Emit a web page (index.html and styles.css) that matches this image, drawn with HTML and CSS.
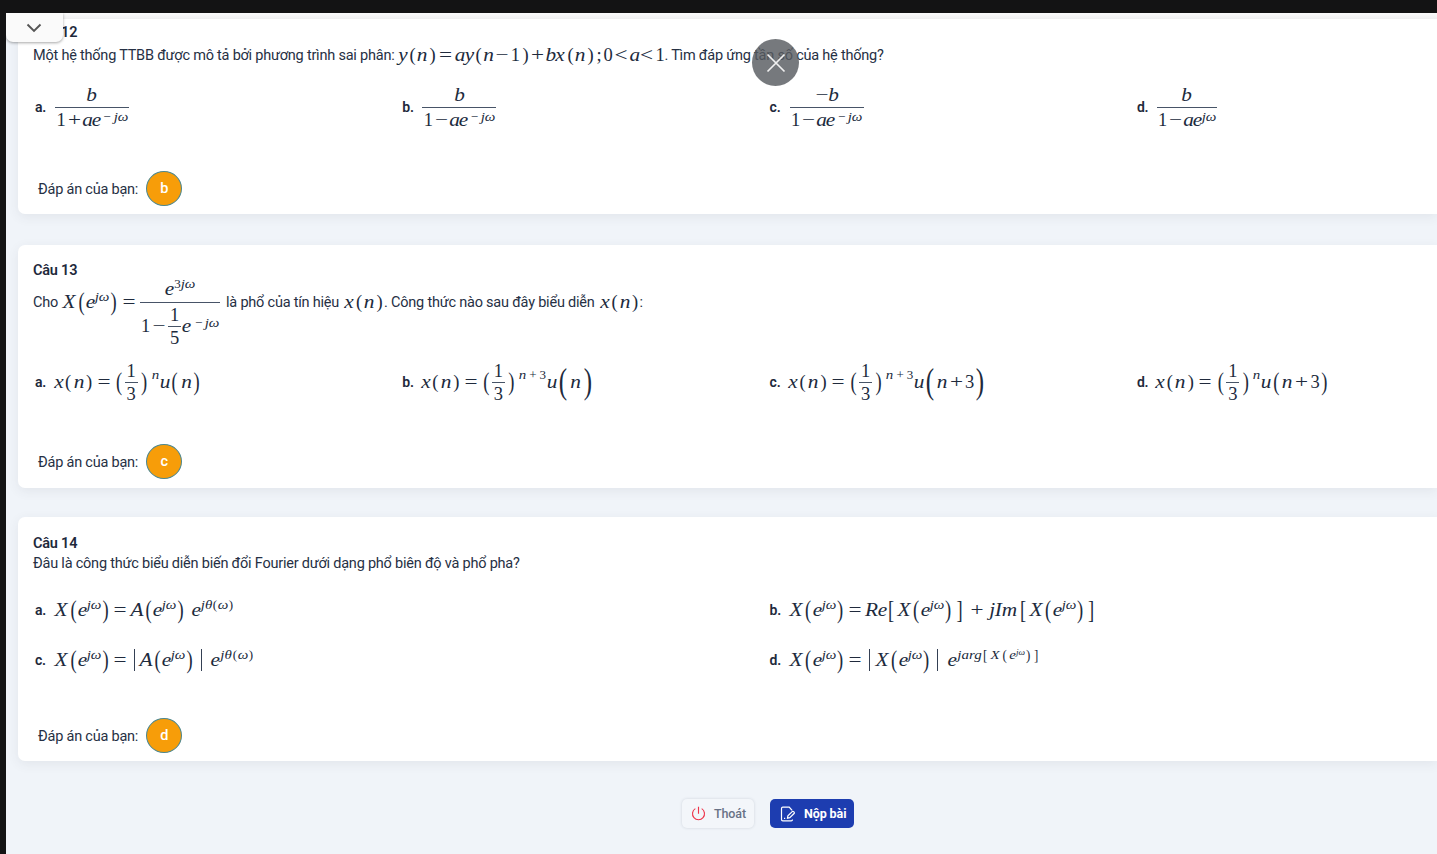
FILE: index.html
```html
<!DOCTYPE html>
<html lang="vi">
<head>
<meta charset="utf-8">
<title>Bài kiểm tra</title>
<link rel="stylesheet" href="styles.css">
</head>
<body>
<div class="screen">
<main class="page">
  <div class="edge"></div>
  <div class="tab"><svg width="16" height="10" viewBox="0 0 16 10"><path d="M1.5 1.5 8 8l6.500-6.500"/></svg></div>
  <div class="close"><svg width="20" height="20" viewBox="0 0 20 20"><path d="M1.500 1.500l17 17M18.500 1.500l-17 17"/></svg></div>

  <section class="card first">
    <h2>Câu 12</h2>
    <div class="question q12"><span class="t1">Một hệ thống TTBB được mô tả bởi phương trình sai phân:</span>
      <span class="m gap"><i class="w10">y</i><span class="w8 p">(</span><i class="w12">n</i><span class="w8 p">)</span><span class="w19">=</span><i class="w10">a</i><i class="w9">y</i><span class="w8 p">(</span><i class="w13">n</i><span class="w14">−</span><span class="w12">1</span><span class="w8 p">)</span><span class="w17">+</span><i class="w8">b</i><i class="w12">x</i><span class="w8 p">(</span><i class="w12">n</i><span class="w8 p">)</span><span class="w9">;</span><span class="w9">0</span><span class="w18">&lt;</span><i class="w8">a</i><span class="w17">&lt;</span><span class="w9">1</span></span><span class="t2">. Tìm đáp ứng tần số của hệ thống?</span></div>
    <div class="options four o12">
      <div class="opt"><strong>a.</strong><span class="m frac big w74"><i>b</i><span class="m den"><span class="w9">1</span><span class="w17">+</span><i class="w9">a</i><i class="w9">e</i><span class="m sup"><span class="w13">−</span><i class="w14">jω</i></span></span></span></div>
      <div class="opt"><strong>b.</strong><span class="m frac big w74"><i>b</i><span class="m den"><span class="w9">1</span><span class="w17">−</span><i class="w9">a</i><i class="w9">e</i><span class="m sup"><span class="w13">−</span><i class="w14">jω</i></span></span></span></div>
      <div class="opt"><strong>c.</strong><span class="m frac big w74"><span class="m"><span class="w14">−</span><i class="w9">b</i></span><span class="m den"><span class="w9">1</span><span class="w17">−</span><i class="w9">a</i><i class="w9">e</i><span class="m sup"><span class="w13">−</span><i class="w14">jω</i></span></span></span></div>
      <div class="opt"><strong>d.</strong><span class="m frac big w60"><i>b</i><span class="m den"><span class="w9">1</span><span class="w17">−</span><i class="w9">a</i><i class="w9">e</i><span class="m sup"><i class="w14">jω</i></span></span></span></div>
    </div>
    <div class="answer"><span class="label">Đáp án của bạn:</span><span class="badge">b</span></div>
  </section>

  <section class="card">
    <h2>Câu 13</h2>
    <div class="question q13"><span class="t3">Cho</span>
      <span class="m gap"><i class="w16">X</i><span class="w9 p tall">(</span><i class="w9">e</i><span class="m sup"><i class="w14">jω</i></span><span class="w9 p tall">)</span><span class="w22">=</span><span class="m frac spectrum w80"><span class="m num"><i class="w9">e</i><span class="m sup"><span class="w7">3</span><i class="w14">jω</i></span></span><span class="m den"><span class="w9">1</span><span class="w18">−</span><span class="m frac small w13"><span>1</span><span>5</span></span><i class="w11">e</i><span class="m sup"><span class="w13">−</span><i class="w14">jω</i></span></span></span></span>
      <span class="t4">là phổ của tín hiệu</span>
      <span class="m gap"><i class="w12">x</i><span class="w8 p">(</span><i class="w12">n</i><span class="w9 p">)</span></span><span class="t5">. Công thức nào sau đây biểu diễn</span>
      <span class="m gap"><i class="w12">x</i><span class="w8 p">(</span><i class="w12">n</i><span class="w9 p">)</span></span><span>:</span></div>
    <div class="options four o13">
      <div class="opt"><strong>a.</strong><span class="m"><i class="w10">x</i><span class="w9 p">(</span><i class="w12">n</i><span class="w9 p">)</span><span class="w20">=</span><span class="w11 p tall">(</span><span class="m frac small w13"><span>1</span><span>3</span></span><span class="w13 p tall">)</span><span class="m sup high"><i class="w9">n</i></span><i class="w10">u</i><span class="w10 p tall">(</span><i class="w13">n</i><span class="w8 p tall">)</span></span></div>
      <div class="opt"><strong>b.</strong><span class="m"><i class="w10">x</i><span class="w9 p">(</span><i class="w12">n</i><span class="w9 p">)</span><span class="w20">=</span><span class="w11 p tall">(</span><span class="m frac small w13"><span>1</span><span>3</span></span><span class="w13 p tall">)</span><span class="m sup high"><i class="w9">n</i><span class="w12">+</span><span class="w8">3</span></span><i class="w10">u</i><span class="w12 p huge">(</span><i class="w13">n</i><span class="w12 p huge">)</span></span></div>
      <div class="opt"><strong>c.</strong><span class="m"><i class="w10">x</i><span class="w9 p">(</span><i class="w12">n</i><span class="w9 p">)</span><span class="w20">=</span><span class="w11 p tall">(</span><span class="m frac small w13"><span>1</span><span>3</span></span><span class="w13 p tall">)</span><span class="m sup high"><i class="w9">n</i><span class="w12">+</span><span class="w8">3</span></span><i class="w10">u</i><span class="w12 p huge">(</span><i class="w12">n</i><span class="w17">+</span><span class="w9">3</span><span class="w12 p huge">)</span></span></div>
      <div class="opt"><strong>d.</strong><span class="m"><i class="w10">x</i><span class="w9 p">(</span><i class="w12">n</i><span class="w9 p">)</span><span class="w20">=</span><span class="w11 p tall">(</span><span class="m frac small w13"><span>1</span><span>3</span></span><span class="w13 p tall">)</span><span class="m sup high"><i class="w9">n</i></span><i class="w10">u</i><span class="w10 p tall">(</span><i class="w12">n</i><span class="w17">+</span><span class="w9">3</span><span class="w10 p tall">)</span></span></div>
    </div>
    <div class="answer"><span class="label">Đáp án của bạn:</span><span class="badge">c</span></div>
  </section>

  <section class="card last">
    <h2>Câu 14</h2>
    <div class="question q14"><span class="t6">Đâu là công thức biểu diễn biến đổi Fourier dưới dạng phổ biên độ và phổ pha?</span></div>
    <div class="options two o14">
      <div class="opt"><strong>a.</strong><span class="m"><i class="w16">X</i><span class="w9 p tall">(</span><i class="w9">e</i><span class="m sup"><i class="w14">jω</i></span><span class="w9 p tall">)</span><span class="w20">=</span><i class="w14">A</i><span class="w9 p tall">(</span><i class="w9">e</i><span class="m sup"><i class="w14">jω</i></span><span class="w9 p tall">)</span><i class="w16 end">e</i><span class="m sup"><i class="w11">jθ</i><span class="w6">(</span><i class="w10">ω</i><span class="w6">)</span></span></span></div>
      <div class="opt"><strong>b.</strong><span class="m"><i class="w16">X</i><span class="w9 p tall">(</span><i class="w9">e</i><span class="m sup"><i class="w14">jω</i></span><span class="w9 p tall">)</span><span class="w20">=</span><i class="w22">Re</i><span class="w9 p tall">[</span><i class="w16">X</i><span class="w9 p tall">(</span><i class="w9">e</i><span class="m sup"><i class="w14">jω</i></span><span class="w9 p tall">)</span><span class="w14 p tall">]</span><span class="w20">+</span><i class="w32">jIm</i><span class="w9 p tall">[</span><i class="w16">X</i><span class="w9 p tall">(</span><i class="w9">e</i><span class="m sup"><i class="w14">jω</i></span><span class="w9 p tall">)</span><span class="w13 p tall">]</span></span></div>
      <div class="opt"><strong>c.</strong><span class="m"><i class="w16">X</i><span class="w9 p tall">(</span><i class="w9">e</i><span class="m sup"><i class="w14">jω</i></span><span class="w9 p tall">)</span><span class="w20">=</span><span class="w9 bar"></span><i class="w14">A</i><span class="w9 p tall">(</span><i class="w9">e</i><span class="m sup"><i class="w14">jω</i></span><span class="w9 p tall">)</span><span class="w14 bar"></span><i class="w12 end">e</i><span class="m sup"><i class="w12">jθ</i><span class="w6">(</span><i class="w10">ω</i><span class="w6">)</span></span></span></div>
      <div class="opt"><strong>d.</strong><span class="m"><i class="w16">X</i><span class="w9 p tall">(</span><i class="w9">e</i><span class="m sup"><i class="w14">jω</i></span><span class="w9 p tall">)</span><span class="w20">=</span><span class="w9 bar"></span><i class="w16">X</i><span class="w9 p tall">(</span><i class="w9">e</i><span class="m sup"><i class="w14">jω</i></span><span class="w9 p tall">)</span><span class="w14 bar"></span><i class="w12 end">e</i><span class="m sup arg"><i class="w25">jarg</i><span class="w7 p tall">[</span><i class="w12">X</i><span class="w8 p tall">(</span><i class="w7">e</i><span class="m sup tiny"><i class="w9">jω</i></span><span class="w7 p tall">)</span><span class="w9 p tall">]</span></span></span></div>
    </div>
    <div class="answer"><span class="label">Đáp án của bạn:</span><span class="badge">d</span></div>
  </section>

  <footer class="actions">
    <button class="btn exit"><svg width="15" height="15" viewBox="0 0 16 16"><path d="M8 .8v7.500M4.600 2.800a6.400 6.400 0 1 0 6.800 0"/></svg>Thoát</button>
    <button class="btn submit"><svg width="16" height="16" viewBox="0 0 16 16"><path d="M11.800 4.500V4L9.200 1.200H2.800q-1.300 0-1.300 1.300v11q0 1.300 1.300 1.300h8.400q1.300 0 1.300-1.300M7.500 12.200l.4-2.400 4.300-4.200q.7-.6 1.400 0l.5.5q.7.700 0 1.400l-4.300 4.200zM4 12.300h1.200"/></svg>Nộp bài</button>
  </footer>
</main>
</div>
</body>
</html>
```

FILE: styles.css
```css
* { box-sizing: border-box; }
body { margin: 0; background: #131314; font-family: Roboto, sans-serif; font-size: 14.5px; letter-spacing: -.22px; color: #263044; }
.screen { height: 854px; padding: 13px 0 0 6px; overflow: hidden; }
.page { position: relative; height: 841px; padding-left: 12px; background: #f0f4f9; overflow: hidden; }
.edge { height: 6px; margin-left: -12px; background: linear-gradient(#fbfbfb, #f3f3f4); }
.tab { position: absolute; z-index: 2; left: 0; top: 0; width: 57px; height: 29px; padding: 10px 0 0 20px; background: #fafafa; border-radius: 0 0 7px 7px; box-shadow: 0 1px 3px rgba(0, 0, 0, .35); line-height: 0; }
.tab svg { fill: none; stroke: #555; stroke-width: 1.9; }
.close { position: absolute; z-index: 2; left: 746px; top: 26px; width: 47px; height: 47px; border-radius: 50%; background: rgba(88, 91, 96, .82); display: grid; place-items: center; }
.close svg { fill: none; stroke: #f0f0f0; stroke-width: 1.7; }

.card { height: 243px; margin-bottom: 29px; padding: 15px 0 0 15px; background: #fff; border-radius: 7px 0 0 7px; box-shadow: 0 3px 12px rgba(60, 70, 80, .08); display: flex; flex-direction: column; }
.card.first { height: 195px; padding-top: 3px; border-radius: 0 0 0 7px; margin-bottom: 31px; }
.card.last { height: 244px; padding-top: 16px; margin-bottom: 0; }
h2 { margin: 0; height: 20px; font-size: 14.500px; line-height: 21px; font-weight: 600; color: #1e293b; }
.question { display: flex; align-items: center; white-space: nowrap; }
.q12 { height: 26px; }
.q13 { height: 44px; }
.q14 { height: 20px; }
.gap { margin-left: 4px; }
.t3 { margin-right: -1px; }
.t4 { margin-left: 6px; }

.options { display: grid; margin-left: 2px; }
.four { grid-template-columns: repeat(4, 367.300px); }
.two { grid-template-columns: repeat(2, 734.600px); }
.o12 { height: 76px; margin-top: 1px; }
.o13 { height: 114px; margin-top: 1px; }
.o14 { height: 100px; margin-top: 12px; grid-auto-rows: 50px; }
.opt { display: flex; align-items: center; }
.opt strong { width: 18.500px; font-weight: 600; font-size: 14px; color: #1e293b; }
.opt > .big { margin-left: 1.500px; }
.o14 strong { width: 18px; }

/* Mathematics: rows of symbols centred on the fraction axis */
.m { display: inline-flex; align-items: center; flex: none; font-family: "Liberation Serif", serif; font-size: 18.5px; line-height: 20px; letter-spacing: 0; white-space: nowrap; color: #202a3c; }
.m > * { flex: none; text-align: center; }
.m > i { transform: scaleX(1.150); }
.m > .w32, .m > .w22, .m > .w14 { letter-spacing: -.2px; }
.m > span.w14:not(.p, .bar), .m > span.w17, .m > span.w18, .m > span.w19, .m > span.w20, .m > span.w22 { transform: scaleX(1.250); }
.sup { font-size: 13px; line-height: 14px; margin-bottom: 10px; }
.sup.high { margin-bottom: 14px; }
.sup.tiny { font-size: 8px; line-height: 9px; margin-bottom: 5px; }
.den > .sup { margin-bottom: 6px; }
.p.tall { transform: scaleY(1.350); }
.p.huge { transform: scale(1.350, 1.900); }
.arg > .p.tall { transform: scaleY(1.200); }
.bar { height: 22px; background: linear-gradient(#344054, #344054) center / 1px 100% no-repeat; }
.m > .end { text-align: right; transform-origin: right; }
.frac { display: inline-grid; grid-template-rows: 1fr 1fr; justify-items: center; background: linear-gradient(#475467, #475467) center / 100% 1px no-repeat; }
.big { height: 50px; }
.small { height: 46px; }
.spectrum { height: 96px; margin: -26px 0; grid-template-rows: 48px 48px; align-items: start; }
.spectrum > .num { align-self: end; margin-bottom: 1px; }
.spectrum > .den { margin-top: 1px; }

.w6 { width: 6px; } .w7 { width: 7px; } .w8 { width: 8px; } .w9 { width: 9px; }
.w10 { width: 10px; } .w11 { width: 11px; } .w12 { width: 12px; } .w13 { width: 13px; }
.w14 { width: 14px; } .w16 { width: 16px; } .w17 { width: 17px; } .w18 { width: 18px; }
.w19 { width: 19px; } .w20 { width: 20px; } .w22 { width: 22px; } .w25 { width: 25px; }
.w32 { width: 32px; } .w60 { width: 60px; } .w74 { width: 74px; } .w80 { width: 80px; }

.answer { display: flex; align-items: center; gap: 8px; height: 36px; margin: auto 0 8px 5px; }
.card + .card .answer { margin-bottom: 9px; }
.card.last .answer { margin-bottom: 8px; }
.label { padding-top: 2px; }
.badge { width: 36px; height: 35px; border: 1px solid #4b8790; border-radius: 50%; background: #f79d09; color: #fff; font-weight: 500; text-align: center; line-height: 34px; }

.actions { display: flex; gap: 16px; margin: 38px 0 0 664px; }
.btn { display: flex; align-items: center; gap: 8px; height: 29px; padding: 0 9px; border: 0; border-radius: 5px; font: 500 12.500px Roboto, sans-serif; letter-spacing: -.1px; white-space: nowrap; }
.btn svg { flex: none; fill: none; stroke: currentColor; stroke-width: 1.200; }
.exit { width: 72px; background: #f3f6fa; color: #687286; box-shadow: 0 0 3px rgba(60, 70, 90, .18); }
.exit svg { stroke: #ee3349; }
.submit { width: 84px; padding-left: 10px; background: #1d3db0; color: #fff; font-weight: 700; }
```
